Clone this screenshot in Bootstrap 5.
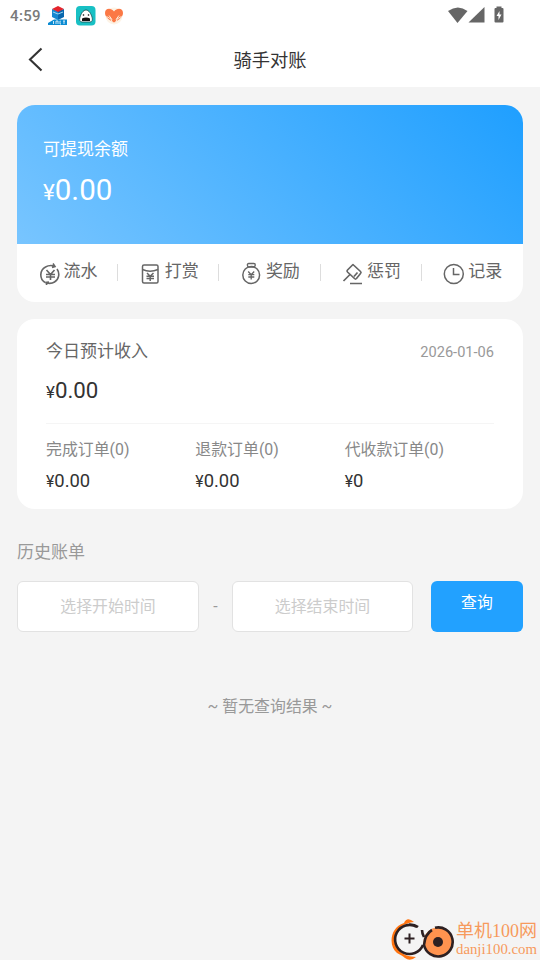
<!DOCTYPE html>
<html lang="zh-CN">
<head>
<meta charset="utf-8">
<meta name="viewport" content="width=device-width, initial-scale=1">
<title>骑手对账</title>
<link rel="stylesheet" href="https://cdn.jsdelivr.net/npm/bootstrap@5.3.0/dist/css/bootstrap.min.css">
<style>
body{width:540px;height:960px;background:#f4f4f4;font-family:Roboto,"Noto Sans CJK SC",sans-serif;font-size:15.9px;line-height:24px;color:#333;overflow:hidden}
svg{display:block;flex:none}
.statusbar{height:32px;padding:0 35px 0 10px;color:#666}
.clock{font-size:15px;letter-spacing:.35px;width:38px;font-weight:500;color:#7a7a7a}
.titlebar{height:55px;font-size:18.3px}
.titlebar svg{margin-left:26px}
.titlebar span{margin-top:2px}
.page{padding:17.5px 17px 0}
.panel{border-radius:18px;background:#fff;overflow:hidden}
.balance{height:139.5px;padding:32px 26px 0;background:linear-gradient(45deg,#78c5ff,#1f9fff);color:#fff;font-size:17px}
.yen{font-size:.86em}
.big{font-size:29.5px;line-height:36px;margin-top:11px}
.big .yen,.income .yen{font-size:.76em}
.tools{height:57.5px;font-size:17px;color:#666}
.tool{width:101.2px;padding-left:21px;height:57.5px}
.tool svg{margin-left:-1px}
.tool span{margin:0 0 4px 2.5px}
.tool+.tool::before{content:"";width:1px;height:17px;background:#ddd;margin-left:-22px;margin-right:21px}
.today{margin-top:17.5px;height:190px;padding:20px 29px 0}
.today-title{font-size:17px;color:#666}
.date{font-size:14.6px;color:#999;padding-top:1px}
.income{font-size:22.3px;line-height:28px;margin-top:11.5px}
.split{height:1px;background:#f5f5f5;margin:17px 0 14px}
.stat{width:149.4px;color:#888}
.stat div{color:#333;font-size:18.4px;margin-top:7px}
.history{font-size:17px;color:#999;margin:30.5px 0 17.5px}
.picker{height:51px;width:182px;border:1px solid #e2e2e2;border-radius:6px;background:#fff;color:#ccc}
.picker-end{width:181px}
.dash{width:33px;color:#999}
.query{width:92px;height:51px;border-radius:6px;background:#22a1ff;border:0;color:#fff;line-height:24px;padding:0 0 8px}
.empty{color:#999;margin-top:62.5px}
.mark-logo{position:absolute;left:389px;top:917px;color:#f79a5c;font-family:"Liberation Serif","Noto Sans CJK SC",serif}
.mark-text{margin-left:1px}
.mark-name{font-size:18px;line-height:20px;white-space:nowrap}
.mark-url{font-size:14.8px;line-height:17px}
</style>
<script src="https://cdn.jsdelivr.net/npm/bootstrap@5.3.0/dist/js/bootstrap.bundle.min.js"></script>
</head>
<body class="position-relative">
<header class="bg-white">
  <div class="statusbar d-flex align-items-center">
    <span class="clock">4:59</span>
    <svg width="20" height="20" viewBox="0 0 20 20"><path d="M4 3l6 2v9l-6-3z" fill="#1687d0"/><path d="M16 3l-6 2v9l6-3z" fill="#0867ae"/><path d="M4 3l6-3 6 3-6 3z" fill="#e5242c"/><path d="M5 6l5 2 5-2" stroke="#9ed8f5" fill="none"/><path d="M6 13.500h13v5.500H0v-2z" fill="#0b8bd2"/><path d="M5.500 15v3M8 18v-3h2v3M12.500 15H12v3h1M15 15h2M16 15v3" stroke="#fff" stroke-width=".8" fill="none"/></svg>
    <svg class="ms-2" width="20" height="20" viewBox="0 0 20 20"><rect width="19.500" height="19.500" rx="4" fill="#18c0c4"/><path d="M10 4c-3 0-5 4-6 7-1 3 0 5 2 5h8c2 0 3-2 2-5-1-3-3-7-6-7z" fill="#fff" stroke="#164c50" stroke-width=".8"/><path d="M6 15v-2.500q4-2 8 0V15z" fill="#111"/><circle cx="7.500" cy="9" r=".8"/><circle cx="12.500" cy="9" r=".8"/></svg>
    <svg class="ms-2" width="20" height="20" viewBox="0 0 20 20"><circle cx="10" cy="10" r="8.500" fill="#fdf3e6"/><path d="M10 16.500C5 14 1 11 1 7 1 2 7 1.500 10 5.500 13 1.500 19 2 19 7c0 4-4 7-9 9.500z" fill="#fb7845"/><path d="M2.500 10.500L7 13l1.500 4M17.500 10.500L13 13l-1.500 4M5 9.500l3 4M15 9.500l-3 4" stroke="#fdebd8" fill="none"/></svg>
    <svg class="ms-auto" width="57" height="20" viewBox="0 0 57 20"><path d="M0 5Q10-2 19.500 5L9.500 17z" fill="#666"/><path d="M36.500 1v15.500h-16z" fill="#666"/><path d="M48.500.5h5V2h1q1 0 1 1v12.500q0 1-1 1h-7q-1 0-1-1V3q0-1 1-1h1z" fill="#666"/><path d="M51.500 5l-3 5h2v4l3-5.500h-2z" fill="#fff"/></svg>
  </div>
  <div class="titlebar d-flex align-items-center position-relative">
    <svg width="20" height="26" viewBox="0 0 20 26"><path d="M15.500 1.500L4 12.500l11.500 11" fill="none" stroke="#333" stroke-width="2.100"/></svg>
    <span class="position-absolute start-50 translate-middle-x">骑手对账</span>
  </div>
</header>
<main class="page">
  <section class="panel">
    <div class="balance"><div>可提现余额</div><div class="big"><span class="yen">¥</span>0.00</div></div>
    <nav class="tools d-flex">
      <div class="tool d-flex align-items-center"><svg width="24" height="24" viewBox="0 0 24 24" fill="none" stroke="#666" stroke-width="1.600"><path d="M8 21.500A9 9 0 0 1 8.500 6q4-2.500 9-1M20 8a9 9 0 0 1-2.500 13q-3 2-8 1M16 2.500l2 3-3 1M10 25l-1-3.500 3-.5M9.500 9l4 4.500 4-4.500M9 13.500h9M9 16h9M13.500 13v6"/></svg><span>流水</span></div>
      <div class="tool d-flex align-items-center"><svg width="24" height="24" viewBox="0 0 24 24" fill="none" stroke="#666" stroke-width="1.500"><rect x="4.500" y="4" width="15.500" height="18" rx="1.500"/><path d="M4.500 8.500q7.500 3.500 15.500 0M9 12l3.200 3.200L15.500 12M8.500 15.200h7.500M8.500 17.500h7.500M12.200 15v5"/></svg><span>打赏</span></div>
      <div class="tool d-flex align-items-center"><svg width="24" height="24" viewBox="0 0 24 24" fill="none" stroke="#666" stroke-width="1.500"><circle cx="12.200" cy="14" r="8.400"/><path d="M9 6L8.300 4q0-1.500 1.500-1.500h5q1.500 0 1.500 1.500l-.8 2zM9.200 10.500l3 3.200 3-3.200M9.300 13.700h6M9.300 16h6M12.200 13.500v5" stroke-width="1.300"/></svg><span>奖励</span></div>
      <div class="tool d-flex align-items-center"><svg width="24" height="24" viewBox="0 0 24 24" fill="none" stroke="#666" stroke-width="1.700"><path d="M12.500 4l7 6.500q1 1 0 2l-4 5q-1 1-2 0l-7-6.500q-1-1 0-2l5-5q.5-.5 1 0zM9 13.500l-6.500 6.500M13 15.500l3.500-4M9 22.500h12"/></svg><span>惩罚</span></div>
      <div class="tool d-flex align-items-center"><svg width="24" height="24" viewBox="0 0 24 24" fill="none" stroke="#666" stroke-width="1.500"><circle cx="11.800" cy="13" r="9.500"/><path d="M11.500 7v6.500h6"/></svg><span>记录</span></div>
    </nav>
  </section>
  <section class="panel today">
    <div class="d-flex justify-content-between"><span class="today-title">今日预计收入</span><span class="date">2026-01-06</span></div>
    <div class="income"><span class="yen">¥</span>0.00</div>
    <div class="split"></div>
    <div class="d-flex">
      <div class="stat">完成订单(0)<div><span class="yen">¥</span>0.00</div></div>
      <div class="stat">退款订单(0)<div><span class="yen">¥</span>0.00</div></div>
      <div class="stat">代收款订单(0)<div><span class="yen">¥</span>0</div></div>
    </div>
  </section>
  <div class="history">历史账单</div>
  <div class="d-flex">
    <div class="picker d-flex align-items-center justify-content-center">选择开始时间</div>
    <div class="dash d-flex align-items-center justify-content-center">-</div>
    <div class="picker picker-end d-flex align-items-center justify-content-center">选择结束时间</div>
    <button class="query ms-auto">查询</button>
  </div>
  <div class="empty text-center">~ 暂无查询结果 ~</div>
</main>
<div class="mark-logo d-flex align-items-center">
  <svg width="66" height="44" viewBox="0 0 66 44" fill="none"><path d="M25 5Q18-1 15 6C1 10-1 29 8 36q6 3 8 5 5 4 11-1Q13 39 9 32C3 23 7 11 17 7q5-2 8-2z" fill="#ff7411"/><path d="M28 10A14.500 14.500 0 1 0 34 28M29 10q-4-3-9-2.500" stroke="#2d2022" stroke-width="2.600"/><path d="M15.500 21.500h10M20.500 16.500v10" stroke="#2d2022" stroke-width="2"/><circle cx="49" cy="25" r="14.500" fill="#ff934f"/><path d="M46 10.800A14.500 14.500 0 1 1 35 28Q36 17 43 13M35 20q-2-4-2-7" stroke="#2d2022" stroke-width="2.600"/><circle cx="49" cy="25" r="5" fill="#2d2022"/></svg>
  <div class="mark-text"><div class="mark-name">单机100网</div><div class="mark-url">danji100.com</div></div>
</div>
</body>
</html>
